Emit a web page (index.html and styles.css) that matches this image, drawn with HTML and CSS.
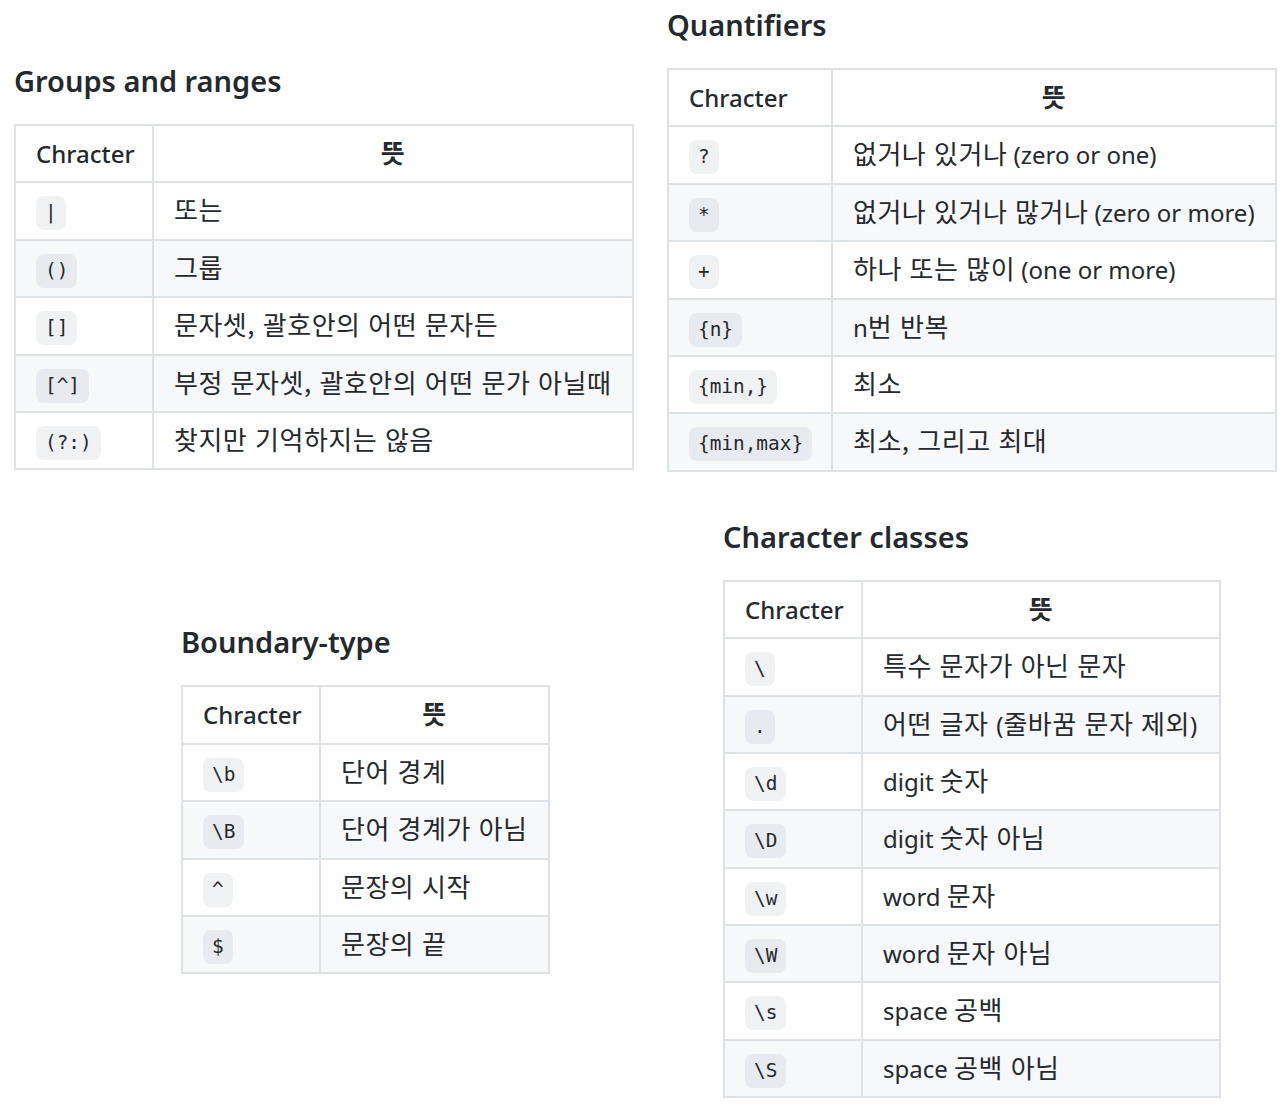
FILE: index.html
```html
<!DOCTYPE html>
<html lang="ko">
<head>
<meta charset="utf-8">
<title>Regex cheatsheet</title>
<link rel="stylesheet" href="styles.css">
</head>
<body>
<div class="page">
  <div class="col col-left">
    <section class="sec sec-groups">
      <h3 class="title">Groups and ranges</h3>
      <table class="tbl t-groups">
        <thead><tr><th class="c1">Chracter</th><th class="c2"><span class="ko">뜻</span></th></tr></thead>
        <tbody>
          <tr><td><code>|</code></td><td><span class="ko">또는</span></td></tr>
          <tr><td><code>()</code></td><td><span class="ko">그룹</span></td></tr>
          <tr><td><code>[]</code></td><td><span class="ko">문자셋, 괄호안의 어떤 문자든</span></td></tr>
          <tr><td><code>[^]</code></td><td><span class="ko">부정 문자셋, 괄호안의 어떤 문가 아닐때</span></td></tr>
          <tr><td><code>(?:)</code></td><td><span class="ko">찾지만 기억하지는 않음</span></td></tr>
        </tbody>
      </table>
    </section>
    <section class="sec sec-boundary">
      <h3 class="title">Boundary-type</h3>
      <table class="tbl t-boundary">
        <thead><tr><th class="c1">Chracter</th><th class="c2"><span class="ko">뜻</span></th></tr></thead>
        <tbody>
          <tr><td><code>\b</code></td><td><span class="ko">단어 경계</span></td></tr>
          <tr><td><code>\B</code></td><td><span class="ko">단어 경계가 아님</span></td></tr>
          <tr><td><code>^</code></td><td><span class="ko">문장의 시작</span></td></tr>
          <tr><td><code>$</code></td><td><span class="ko">문장의 끝</span></td></tr>
        </tbody>
      </table>
    </section>
  </div>
  <div class="col col-right">
    <section class="sec sec-quant">
      <h3 class="title">Quantifiers</h3>
      <table class="tbl t-quant">
        <thead><tr><th class="c1">Chracter</th><th class="c2"><span class="ko">뜻</span></th></tr></thead>
        <tbody>
          <tr><td><code>?</code></td><td><span class="ko">없거나 있거나</span> (zero or one)</td></tr>
          <tr><td><code>*</code></td><td><span class="ko">없거나 있거나 많거나</span> (zero or more)</td></tr>
          <tr><td><code>+</code></td><td><span class="ko">하나 또는 많이</span> (one or more)</td></tr>
          <tr><td><code>{n}</code></td><td>n<span class="ko">번 반복</span></td></tr>
          <tr><td><code>{min,}</code></td><td><span class="ko">최소</span></td></tr>
          <tr><td><code>{min,max}</code></td><td><span class="ko">최소, 그리고 최대</span></td></tr>
        </tbody>
      </table>
    </section>
    <section class="sec sec-classes">
      <h3 class="title">Character classes</h3>
      <table class="tbl t-classes">
        <thead><tr><th class="c1">Chracter</th><th class="c2"><span class="ko">뜻</span></th></tr></thead>
        <tbody>
          <tr><td><code>\</code></td><td><span class="ko">특수 문자가 아닌 문자</span></td></tr>
          <tr><td><code>.</code></td><td><span class="ko">어떤 글자 </span>(<span class="ko">줄바꿈 문자 제외</span>)</td></tr>
          <tr><td><code>\d</code></td><td>digit <span class="ko">숫자</span></td></tr>
          <tr><td><code>\D</code></td><td>digit <span class="ko">숫자 아님</span></td></tr>
          <tr><td><code>\w</code></td><td>word <span class="ko">문자</span></td></tr>
          <tr><td><code>\W</code></td><td>word <span class="ko">문자 아님</span></td></tr>
          <tr><td><code>\s</code></td><td>space <span class="ko">공백</span></td></tr>
          <tr><td><code>\S</code></td><td>space <span class="ko">공백 아님</span></td></tr>
        </tbody>
      </table>
    </section>
  </div>
</div>
</body>
</html>
```
FILE: styles.css
```css
html, body {
  margin: 0;
  padding: 0;
  background: #ffffff;
}

body {
  font-family: "Noto Sans", "Noto Sans CJK KR", sans-serif;
  color: #24292e;
  font-size: 24px;
}

.page {
  display: flex;
  align-items: flex-start;
}

.col-left {
  width: 667px;
  flex: none;
}

.col-right {
  flex: 1;
}

.title {
  margin: 0 0 25px 0;
  font-size: 29px;
  line-height: 36px;
  font-weight: 600;
}

.sec-groups {
  margin: 63px 0 0 14px;
}

.sec-boundary {
  margin: 154px 0 0 181px;
}

.sec-quant {
  margin: 7px 0 0 0;
}

.sec-classes {
  margin: 47px 0 0 56px;
}

.tbl {
  border-collapse: collapse;
  table-layout: fixed;
}

.t-groups { width: 620px; }
.t-quant { width: 610px; }
.t-boundary { width: 369px; }
.t-classes { width: 498px; }

.t-groups .c1, .t-boundary .c1, .t-classes .c1 { width: 96px; }
.t-quant .c1 { width: 122px; }

.tbl th, .tbl td {
  border: 2px solid #dfe2e5;
  padding: 11px 20px 10.4px 20px;
  line-height: 34px;
  height: 34px;
  text-align: left;
  white-space: nowrap;
}

.tbl th {
  font-weight: 500;
}

.tbl th.c2 {
  text-align: center;
  font-weight: 700;
}

.ko {
  font-family: "Noto Sans CJK KR", sans-serif;
  font-size: 26px;
  line-height: 24px;
  letter-spacing: 0.5px;
}

.tbl tbody tr:nth-child(even) {
  background: #f6f8fa;
}

.tbl code {
  font-family: "DejaVu Sans Mono", "Liberation Mono", monospace;
  font-size: 19.4px;
  line-height: 26px;
  display: inline-block;
  padding: 4px 9px;
  margin: 2px 0 -2px 0;
  border-radius: 8px;
  background: rgba(175, 184, 193, 0.2);
  vertical-align: top;
  color: #24292e;
}
```
